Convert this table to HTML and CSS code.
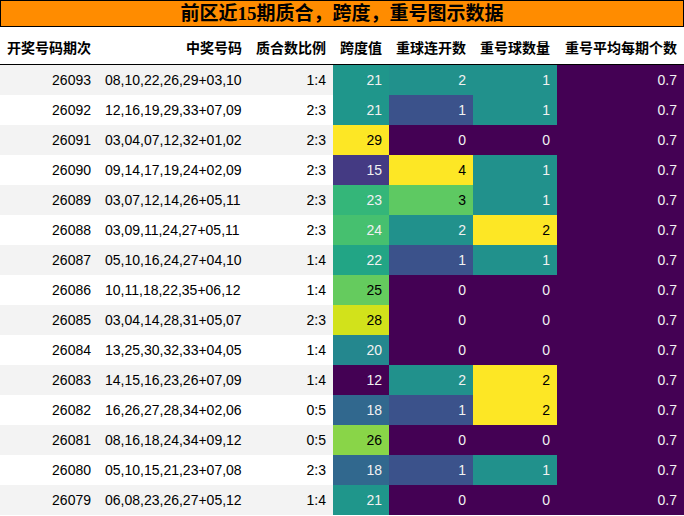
FILE: index.html
```html
<!DOCTYPE html>
<html lang="zh">
<head>
<meta charset="utf-8">
<title>前区近15期质合，跨度，重号图示数据</title>
<link rel="stylesheet" href="styles.css">
</head>
<body>
<table class="data">
  <caption class="title">前区近15期质合，跨度，重号图示数据</caption>
  <colgroup>
    <col class="w-issue"><col class="w-nums"><col class="w-ratio"><col class="w-span"><col class="w-rep"><col class="w-cnt"><col class="w-avg">
  </colgroup>
  <thead>
    <tr>
      <th>开奖号码期次</th><th>中奖号码</th><th>质合数比例</th><th>跨度值</th><th>重球连开数</th><th>重号球数量</th><th>重号平均每期个数</th>
    </tr>
  </thead>
  <tbody>
    <tr><td>26093</td><td class="left">08,10,22,26,29+03,10</td><td>1:4</td><td class="s21">21</td><td class="g2">2</td><td class="g2">1</td><td class="g0">0.7</td></tr>
    <tr><td>26092</td><td class="left">12,16,19,29,33+07,09</td><td>2:3</td><td class="s21">21</td><td class="g1">1</td><td class="g2">1</td><td class="g0">0.7</td></tr>
    <tr><td>26091</td><td class="left">03,04,07,12,32+01,02</td><td>2:3</td><td class="s29">29</td><td class="g0">0</td><td class="g0">0</td><td class="g0">0.7</td></tr>
    <tr><td>26090</td><td class="left">09,14,17,19,24+02,09</td><td>2:3</td><td class="s15">15</td><td class="g4">4</td><td class="g2">1</td><td class="g0">0.7</td></tr>
    <tr><td>26089</td><td class="left">03,07,12,14,26+05,11</td><td>2:3</td><td class="s23">23</td><td class="g3">3</td><td class="g2">1</td><td class="g0">0.7</td></tr>
    <tr><td>26088</td><td class="left">03,09,11,24,27+05,11</td><td>2:3</td><td class="s24">24</td><td class="g2">2</td><td class="g4">2</td><td class="g0">0.7</td></tr>
    <tr><td>26087</td><td class="left">05,10,16,24,27+04,10</td><td>1:4</td><td class="s22">22</td><td class="g1">1</td><td class="g2">1</td><td class="g0">0.7</td></tr>
    <tr><td>26086</td><td class="left">10,11,18,22,35+06,12</td><td>1:4</td><td class="s25">25</td><td class="g0">0</td><td class="g0">0</td><td class="g0">0.7</td></tr>
    <tr><td>26085</td><td class="left">03,04,14,28,31+05,07</td><td>2:3</td><td class="s28">28</td><td class="g0">0</td><td class="g0">0</td><td class="g0">0.7</td></tr>
    <tr><td>26084</td><td class="left">13,25,30,32,33+04,05</td><td>1:4</td><td class="s20">20</td><td class="g0">0</td><td class="g0">0</td><td class="g0">0.7</td></tr>
    <tr><td>26083</td><td class="left">14,15,16,23,26+07,09</td><td>1:4</td><td class="g0">12</td><td class="g2">2</td><td class="g4">2</td><td class="g0">0.7</td></tr>
    <tr><td>26082</td><td class="left">16,26,27,28,34+02,06</td><td>0:5</td><td class="s18">18</td><td class="g1">1</td><td class="g4">2</td><td class="g0">0.7</td></tr>
    <tr><td>26081</td><td class="left">08,16,18,24,34+09,12</td><td>0:5</td><td class="s26">26</td><td class="g0">0</td><td class="g0">0</td><td class="g0">0.7</td></tr>
    <tr><td>26080</td><td class="left">05,10,15,21,23+07,08</td><td>2:3</td><td class="s18">18</td><td class="g1">1</td><td class="g2">1</td><td class="g0">0.7</td></tr>
    <tr><td>26079</td><td class="left">06,08,23,26,27+05,12</td><td>1:4</td><td class="s21">21</td><td class="g0">0</td><td class="g0">0</td><td class="g0">0.7</td></tr>
  </tbody>
</table>
</body>
</html>
```

FILE: styles.css
```css
html, body {
  margin: 0;
  padding: 0;
  background: #ffffff;
}

.data {
  width: 684px;
  table-layout: fixed;
  border-collapse: separate;
  border-spacing: 0;
  font-family: "Liberation Sans", "Noto Sans CJK SC", sans-serif;
  font-size: 14px;
  color: #000000;
}

.title {
  height: 25px;
  line-height: 25px;
  background: #ff8c00;
  border: 1px solid #000000;
  font-family: "Liberation Serif", "Noto Sans CJK SC", serif;
  font-weight: bold;
  font-size: 19px;
  color: #000000;
  text-align: center;
  white-space: nowrap;
}

.w-issue { width: 98px; }
.w-nums { width: 151px; }
.w-ratio { width: 84px; }
.w-span { width: 56px; }
.w-rep { width: 84px; }
.w-cnt { width: 84px; }
.w-avg { width: 127px; }

.data th {
  padding: 11px 7px 6px;
  line-height: 20px;
  font-weight: bold;
  text-align: right;
  white-space: nowrap;
  border-bottom: 1px solid #000000;
  vertical-align: middle;
}

.data td {
  height: 30px;
  line-height: 30px;
  padding: 0 7px;
  text-align: right;
  white-space: nowrap;
  vertical-align: middle;
}

.data td.left {
  text-align: left;
  padding-left: 7px;
}

.data tbody tr:nth-child(odd) td {
  background: #f3f3f3;
}

.data tbody tr:nth-child(even) td {
  background: #ffffff;
}

/* viridis gradient cells */
.data tbody tr td.g0 { background: #440154; color: #f1f1f1; }
.data tbody tr td.g1 { background: #3b528b; color: #f1f1f1; }
.data tbody tr td.g2 { background: #21918c; color: #f1f1f1; }
.data tbody tr td.g3 { background: #5ec962; color: #000000; }
.data tbody tr td.g4 { background: #fde725; color: #000000; }

.data tbody tr td.s15 { background: #443a83; color: #f1f1f1; }
.data tbody tr td.s18 { background: #31688e; color: #f1f1f1; }
.data tbody tr td.s20 { background: #24878e; color: #f1f1f1; }
.data tbody tr td.s21 { background: #1f968b; color: #f1f1f1; }
.data tbody tr td.s22 { background: #22a585; color: #f1f1f1; }
.data tbody tr td.s23 { background: #34b679; color: #f1f1f1; }
.data tbody tr td.s24 { background: #46c06f; color: #f1f1f1; }
.data tbody tr td.s25 { background: #65cb5e; color: #000000; }
.data tbody tr td.s26 { background: #89d548; color: #000000; }
.data tbody tr td.s28 { background: #d2e21b; color: #000000; }
.data tbody tr td.s29 { background: #fde725; color: #000000; }
```
